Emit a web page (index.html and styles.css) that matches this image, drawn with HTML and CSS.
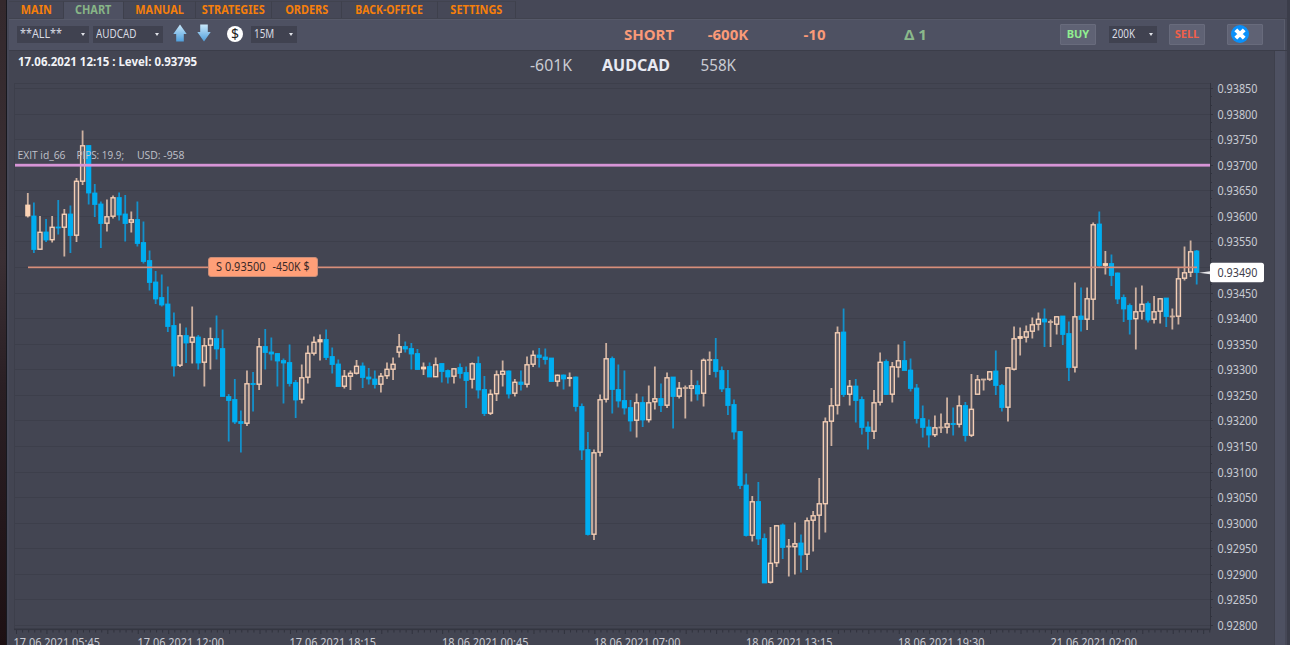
FILE: index.html
```html
<!DOCTYPE html>
<html lang="en">
<head>
  <meta charset="UTF-8">
  <meta name="viewport" content="width=device-width, initial-scale=1.0">
  <title>AUDCAD chart</title>
  <link rel="stylesheet" href="styles.css">
</head>
<body>
  <div class="edge"></div>
  <div class="window">
    <nav class="tabs">
      <a class="tab main"><span>MAIN</span></a>
      <a class="tab chart active"><span>CHART</span></a>
      <a class="tab manual"><span>MANUAL</span></a>
      <a class="tab strategies"><span>STRATEGIES</span></a>
      <a class="tab orders"><span>ORDERS</span></a>
      <a class="tab back-office"><span>BACK-OFFICE</span></a>
      <a class="tab settings"><span>SETTINGS</span></a>
    </nav>

    <div class="toolbar">
      <div class="group filters">
        <div class="select account"><span>**ALL**</span><i></i></div>
        <div class="select symbol"><span>AUDCAD</span><i></i></div>
        <svg class="arrow" width="14" height="18" viewBox="0 0 14 18">
          <defs>
            <linearGradient id="blue" x1="0" y1="0" x2="0" y2="1">
              <stop offset="0" stop-color="#c9e8fb"/>
              <stop offset="1" stop-color="#4f9fdc"/>
            </linearGradient>
          </defs>
          <path d="M7 .5 13.7 10H10.8V17.5H3.2V10H.3Z" fill="url(#blue)"/>
        </svg>
        <svg class="arrow down" width="14" height="18" viewBox="0 0 14 18">
          <path d="M7 17.5 .3 8H3.2V.5H10.8V8H13.7Z" fill="url(#blue)"/>
        </svg>
        <div class="dollar">$</div>
        <div class="select period"><span>15M</span><i></i></div>
      </div>
      <div class="group stats">
        <span class="stat side">SHORT</span>
        <span class="stat amount">-600K</span>
        <span class="stat pips">-10</span>
        <span class="stat delta">Δ 1</span>
      </div>
      <div class="group actions">
        <button class="buy"><span>BUY</span></button>
        <div class="select size"><span>200K</span><i></i></div>
        <button class="sell"><span>SELL</span></button>
        <button class="close">
          <svg width="18" height="18" viewBox="0 0 18 18">
            <circle cx="9" cy="9" r="9" fill="#0a90fa"/>
            <path d="M4.8 4.8 13.2 13.2M13.2 4.8 4.8 13.2" stroke="#fff" stroke-width="4"/>
          </svg>
        </button>
      </div>
    </div>

    <div class="content">
      <svg id="chart" class="plot" width="1265" height="594" viewBox="9 51 1265 594"></svg>
      <div class="scroll"></div>
    </div>
  </div>
  <script src="chart.js"></script>
</body>
</html>
```
FILE: styles.css
```css
* {
  box-sizing: border-box;
}
body {
  margin: 0;
  width: 1290px;
  height: 645px;
  display: flex;
  overflow: hidden;
  background-color: #3b3d4a;
  font-family: "Noto Sans", sans-serif;
  font-size: 12px;
  color: #d9dbe3;
}
.edge {
  width: 7px;
  background: linear-gradient(#34292d, #3a2f34 40%, #2a1f24 60%, #1d1013);
  border-right: 1px solid #17181f;
}
.window {
  width: 1280px;
  padding-left: 2px;
  background-color: #464857;
  display: flex;
  flex-direction: column;
}
.tabs {
  height: 19px;
  display: flex;
  padding-top: 1px;
  border-bottom: 1px solid #41434f;
}
.tab {
  display: flex;
  justify-content: center;
  align-items: center;
  border-right: 1px solid #3e404c;
  border-top: 1px solid #41434f;
  color: #f57f0b;
  font-size: 11.5px;
  font-weight: bold;
  line-height: 1;
}
.tab span {
  white-space: nowrap;
  transform: scaleX(.95);
}
.tab.active {
  background-color: #4e5162;
  color: #87b587;
  height: 18px;
  padding-bottom: 1px;
}
.tab.main { width: 55px; }
.tab.chart { width: 60px; }
.tab.manual { width: 72px; }
.tab.strategies { width: 76px; }
.tab.orders { width: 70px; }
.tab.back-office { width: 96px; }
.tab.settings { width: 78px; }
.tab.back-office span { transform: scaleX(.91); }

.toolbar {
  width: 1276px;
  height: 31px;
  display: flex;
  align-items: center;
  padding-bottom: 2px;
  background-color: #4e5162;
  border-top: 1px solid #565969;
  border-right: 1px solid #5a5d6d;
}
.group {
  display: flex;
  align-items: center;
}
.filters {
  width: 610px;
  padding-left: 8px;
}
.select {
  height: 17px;
  padding: 0 4px 0 3px;
  display: flex;
  align-items: center;
  justify-content: space-between;
  background-color: #404250;
  line-height: 1;
}
.select span {
  width: 0;
  white-space: nowrap;
  transform: scaleX(.82);
  transform-origin: left;
}
.select i {
  border: 2px solid transparent;
  border-top: 3px solid #e0e2e8;
  border-bottom: 0;
}
.account { width: 72px; margin-right: 4px; }
.account span { transform: scaleX(.9); }
.symbol { width: 70px; margin-right: 10px; }
.arrow { margin-right: 10px; margin-top: -2px; }
.arrow.down { margin-right: 16px; }
.dollar {
  width: 16px;
  height: 16px;
  border-radius: 50%;
  margin-right: 8px;
  background-color: #fff;
  color: #222;
  font-size: 14px;
  line-height: 16px;
  text-align: center;
}
.period { width: 46px; }
.stats {
  width: 441px;
  font-size: 15px;
  font-weight: bold;
  color: #fa9a78;
}
.stat { text-align: center; }
.side { width: 60px; }
.amount { width: 98px; }
.pips { width: 75px; }
.delta { width: 127px; color: #8bb98b; }
.actions button {
  width: 36px;
  height: 21px;
  padding: 0;
  border: 1px solid #686b7c;
  border-radius: 1px;
  background-color: #5f6274;
  font: bold 11px "Noto Sans", sans-serif;
  line-height: 18px;
}
.actions .buy { color: #90ee90; margin-right: 13px; }
.actions .sell { color: #f0604a; margin-right: 22px; }
.size { width: 48px; margin-right: 12px; }
.actions .close {
  display: flex;
  align-items: center;
  padding-left: 3px;
}
.close svg {
  flex: none;
}
.content {
  display: flex;
  height: 595px;
  border-top: 1px solid #3b3d49;
}
.plot {
  background-color: #434552;
}
.scroll {
  width: 11px;
  background-color: #4e5162;
  border-left: 1px solid #3e404c;
}

/* chart */
.grid { stroke: #3d3f4b; }
.axis { stroke: #31333e; }
.plot text { fill: #c9cbd3; font-size: 12.5px; }
.plot .level { fill: #f2f3f7; font-weight: bold; font-size: 12px; }
.plot .big { font-size: 16.5px; }
.plot .name { font-size: 16.5px; font-weight: bold; fill: #e8eaf2; }
.plot .exit { font-family: "Open Sans", "Noto Sans", sans-serif; font-size: 11px; fill: #c0c2ca; }
.plot .dark { fill: #3a2a28; }
.plot .now { fill: #3f414d; }
.wick-down { stroke: #1391cb; stroke-width: 1.8; }
.body-down { fill: #00adf0; }
.wick-up { stroke: #cdb09f; stroke-width: 1.8; }
.body-up { fill: #5f5b64; stroke: #f3ceb5; stroke-width: 1.4; }
.body-fill { fill: #fbd3b5; }
```
FILE: chart.js
```js
const NS = 'http://www.w3.org/2000/svg';
const chart = document.querySelector('#chart');

// type (d = down, u = up, f = filled up, t = doji), high, body top, body bottom, low
const candles = `
f 193 205 216 217.5|d 202.5 216 249.5 253|u 216 232 249.5 249.5|d 219 232 240 242|u 216 227 240 242.5
d 200 227 228 234.5|u 209 214 227.5 256.5|d 205.5 214 235.5 253|u 178 181 235.5 242|u 130.5 145.5 181.5 185
d 145.5 145.5 193 204.5|d 184 193 204.5 217|d 201.5 204 223.5 248|u 199.5 216.5 223.5 231.5|u 195.5 197.5 216.5 218.5
d 192.5 197.5 215 220.5|d 195 214 223.5 241.5|u 211.5 219.5 222.5 232.5|d 201.5 219.5 243.5 246.5|d 221.5 242.5 261.5 263.5
d 250.5 260.5 282.5 290.5|d 271 282 299 304|d 274.5 297.5 305 306.5|d 286.5 304 326.5 332|d 312.5 325.5 366 376.5
u 323.5 335.5 365.5 367|d 327.5 335.5 343 363|u 306.5 337 342.5 363.5|d 335 337 363 369.5|u 338 345.5 362.5 386.5
u 327.5 338.5 345.5 369.5|d 315.5 338.5 349 359.5|d 329.5 348.5 396.5 396.5|d 394 396.5 400.5 441.5|d 379 399.5 422 424
d 410.5 421.5 423.5 452.5|u 370.5 383.5 423.5 426|d 372 383.5 384.5 411.5|u 338 346.5 384.5 390|d 329 346.5 352.5 369.5
d 337.5 352 354 360.5|d 353 353.5 361 386.5|d 358.5 360.5 363 403.5|d 344.5 362.5 383.5 386.5|d 380 382.5 400 418
u 364.5 377.5 399.5 403.5|u 345.5 353 377.5 383.5|u 336.5 342 353.5 355.5|f 334.5 339.5 342 360.5|d 329.5 339.5 357.5 360
d 347.5 356.5 364.5 373.5|d 359.5 364 386.5 386.5|u 370 376 386.5 388.5|u 370.5 373 376.5 390|u 360 366 373.5 374.5
d 362.5 366 377.5 388|d 368 377 379 384.5|d 370.5 379 384.5 388.5|u 373 376 384.5 392.5|u 362.5 369 376 379
u 357.5 364 369.5 380|u 334 346.5 352.5 357.5|d 341.5 346.5 349 352.5|d 343 348.5 354 369.5|d 349 353.5 369.5 369.5
f 362.5 367 369 375|d 362.5 366.5 377 377|u 357.5 364.5 377 377|d 363.5 363.5 371.5 382.5|d 369.5 370.5 377 383.5
u 368.5 368.5 376.5 383.5|d 363.5 367.5 373.5 378.5|d 366.5 372.5 380.5 408|u 362.5 363.5 379.5 388.5|d 356.5 363.5 390 398.5
d 376 389.5 413.5 416|u 389.5 394 413.5 415|u 370.5 374.5 394 401|u 360.5 371 374.5 386.5|d 370.5 371 394 398.5
u 379 382 393.5 396.5|d 370.5 382 384.5 390.5|u 356.5 364.5 384.5 387.5|u 350.5 355 364.5 367|d 348 355 357.5 367.5
d 348.5 357 359.5 364.5|d 358 358 381.5 381.5|u 374.5 375 381.5 386.5|d 374.5 375 379 389.5|f 372.5 377.5 378.5 386.5
d 376.5 377 406.5 411.5|d 403.5 406.5 450 460|d 432 449.5 534.5 535.5|u 449.5 452.5 534.5 540|u 394.5 399.5 452.5 456.5
u 343 358.5 399.5 402.5|d 356.5 358.5 389.5 413.5|d 364.5 389.5 401 407.5|d 370.5 400.5 408 414.5|d 400 407.5 421 431.5
u 393.5 402.5 420.5 437.5|d 396.5 402.5 420 427|u 385.5 402.5 420 422.5|u 366.5 398.5 402 409.5|d 383.5 398.5 405.5 412
u 372.5 377.5 405.5 408|d 377 377 396.5 428.5|u 382 388 396.5 398.5|t 385.5 388 388.5 418.5|u 370 385.5 388.5 401.5
d 380.5 385.5 394 400.5|u 358.5 360 393.5 406.5|t 351.5 360 360 375|d 338 359.5 371.5 377.5|d 366.5 370.5 389 392
d 370 388.5 405.5 415|d 399.5 404.5 432 439.5|d 431 431.5 485.5 489|d 473.5 485 535.5 536.5|u 496 501.5 535.5 541.5
d 482 501.5 539 545|d 533.5 538.5 583 583|u 527 563 582.5 583.5|u 525.5 525.5 563 567|d 523.5 525 547.5 559
t 539 546.5 546.5 576.5|u 522.5 543.5 547 574.5|d 534.5 543 555 572.5|u 517.5 520.5 554.5 570|u 511 515.5 520.5 551.5
u 478 503.5 515.5 539.5|u 417.5 421.5 504 532.5|u 388 405.5 421.5 446|u 326.5 332.5 405.5 414.5|d 308.5 332 394.5 397
u 380 386 394.5 405.5|d 379 386 400.5 422.5|d 396.5 399.5 427.5 434.5|d 421.5 427 431.5 449.5|u 390 402.5 431.5 439
u 352.5 362 402.5 405.5|d 359.5 361.5 394.5 395|u 362 366.5 394.5 402.5|u 344.5 360.5 367.5 377.5|d 341 360.5 370.5 370.5
d 358.5 370 388.5 391.5|d 384 388 418.5 423.5|d 405.5 418.5 427.5 437.5|d 419.5 427 435 447.5|u 415.5 427.5 435 437
t 413.5 427.5 427.5 433|u 397.5 423.5 427.5 433.5|d 407.5 423.5 424.5 435.5|u 395.5 405.5 424.5 427.5|d 402 405.5 435.5 441.5
u 374 409 435.5 437|u 375 379.5 394.5 394.5|t 379.5 379.5 379.5 390.5|u 371 371.5 379.5 381|d 350.5 371 385.5 395
d 384 385.5 407.5 411.5|u 367.5 367.5 407.5 421.5|u 326.5 338.5 369.5 370.5|f 327.5 336.5 338.5 355.5|u 325.5 331.5 337.5 342.5
u 317.5 324.5 331.5 338.5|u 312.5 319 324.5 330.5|d 308.5 319 322 347|t 319.5 322 322 347|u 316.5 316.5 324.5 334.5
d 316 316 334.5 345|d 321.5 333.5 367.5 381|u 282.5 316.5 367.5 372.5|d 287.5 316 319.5 331.5|u 287.5 298.5 319.5 330
u 222.5 224.5 299.5 320|d 211.5 224 265.5 267.5|f 251 263.5 265.5 274.5|d 254.5 263.5 275.5 286|d 272.5 273 299 304
d 294.5 297.5 309 322|d 303.5 305.5 319.5 334.5|u 287.5 311.5 319 349.5|u 285.5 304 311.5 319.5|d 301.5 303.5 320 322.5
u 296 311.5 319.5 323.5|u 298.5 298.5 311.5 323.5|d 298 298 316.5 327|t 308.5 316.5 316.5 329.5|u 268 278.5 316.5 324.5
u 246.5 272.5 278.5 280.5|u 240.5 251.5 272.5 277|d 250 251 272.5 284.5`.trim().split(/[|\n]/);

function add(tag, attrs, text) {
  const el = document.createElementNS(NS, tag);
  for (const key in attrs) el.setAttribute(key, attrs[key]);
  if (text) el.textContent = text;
  chart.appendChild(el);
}

function line(cls, x1, y1, x2, y2) {
  add('line', { class: cls, x1, y1, x2, y2 });
}

function label(cls, x, y, width, text) {
  add('text', { class: cls, x, y, textLength: width, lengthAdjust: 'spacingAndGlyphs' }, text);
}

// grid and price axis
line('grid', 14, 83.5, 1210, 83.5);
line('grid', 14.5, 83, 14.5, 629);
for (let i = 0; i < 22; i++) {
  const y = Math.round(88 + i * 25.57) + 0.5;
  line('grid', 15, y, 1210, y);
  line('axis', 1210, y, 1213, y);
  if (i < 21) {
    line('axis', 1210, y + 8, 1212, y + 8);
    line('axis', 1210, y + 17, 1212, y + 17);
  }
  if (i !== 7) label('', 1217.5, y + 4, 40, (0.9385 - i * 0.0005).toFixed(5));
}
line('axis', 1210.5, 83, 1210.5, 630);

// time axis
add('rect', { x: 14, y: 628.5, width: 1197, height: 1.6, fill: '#343641' });
for (let i = 0; i < 197; i++) {
  line('axis', 16.5 + i * 6.088, 630, 16.5 + i * 6.088, i % 5 ? 632.5 : 634);
}
[[13.5, '17.06.2021 05:45'], [137.5, '17.06.2021 12:00'], [289.5, '17.06.2021 18:15'], [442, '18.06.2021 00:45'],
  [594, '18.06.2021 07:00'], [746, '18.06.2021 13:15'], [898, '18.06.2021 19:30'], [1050.5, '21.06.2021 02:00']
].forEach(([x, text]) => label('', x, 647, 86.5, text));

candles.forEach((row, i) => {
  const [type, ...values] = row.split(' ');
  const [high, top, bottom, low] = values.map(Number);
  const x = 27.8 + i * 6.088;
  if (type === 'd') {
    line('wick-down', x, high, x, low);
    add('rect', { class: 'body-down', x: x - 2.6, y: top - 0.4, width: 5.2, height: bottom - top + 0.8 });
  } else {
    line('wick-up', x, high, x, low);
    if (type === 'u') {
      add('rect', { class: 'body-up', x: x - 2, y: top + 0.3, width: 4, height: Math.max(bottom - top - 0.6, 2.4) });
    } else if (type === 'f') {
      add('rect', { class: 'body-fill', x: x - 2.6, y: top - 0.4, width: 5.2, height: bottom - top + 0.8 });
    } else {
      line('wick-up', x - 2.6, top, x + 2.6, top);
    }
  }
});

// order and exit levels
add('rect', { x: 28, y: 266.5, width: 1169, height: 1.7, fill: '#d78e7a' });
add('rect', { x: 15, y: 163.8, width: 1195, height: 2.8, fill: '#d794d6' });
label('exit', 17.5, 159, 48, 'EXIT id_66');
label('exit', 76.5, 159, 47.5, 'PIPS: 19.9;');
label('exit', 137, 159, 47.5, 'USD: -958');
add('rect', { x: 208.5, y: 257.5, width: 109, height: 19, rx: 2.5, fill: '#ff9f78', stroke: '#c98d78' });
label('dark', 216, 271, 49.5, 'S 0.93500');
label('dark', 272.5, 271, 37, '-450K $');

// current price
add('path', { d: 'M1199 272.8 1210 271.3V274.3Z', fill: '#e6e6ea' });
add('rect', { x: 1210, y: 262.8, width: 54, height: 19.4, rx: 2.5, fill: '#fff' });
label('now', 1217.5, 276.5, 40, '0.93490');

label('level', 18, 65.5, 179, '17.06.2021 12:15 : Level: 0.93795');
label('big', 530, 70.5, 42, '-601K');
label('name', 602, 70.5, 68, 'AUDCAD');
label('big', 700.5, 70.5, 35.5, '558K');
```
